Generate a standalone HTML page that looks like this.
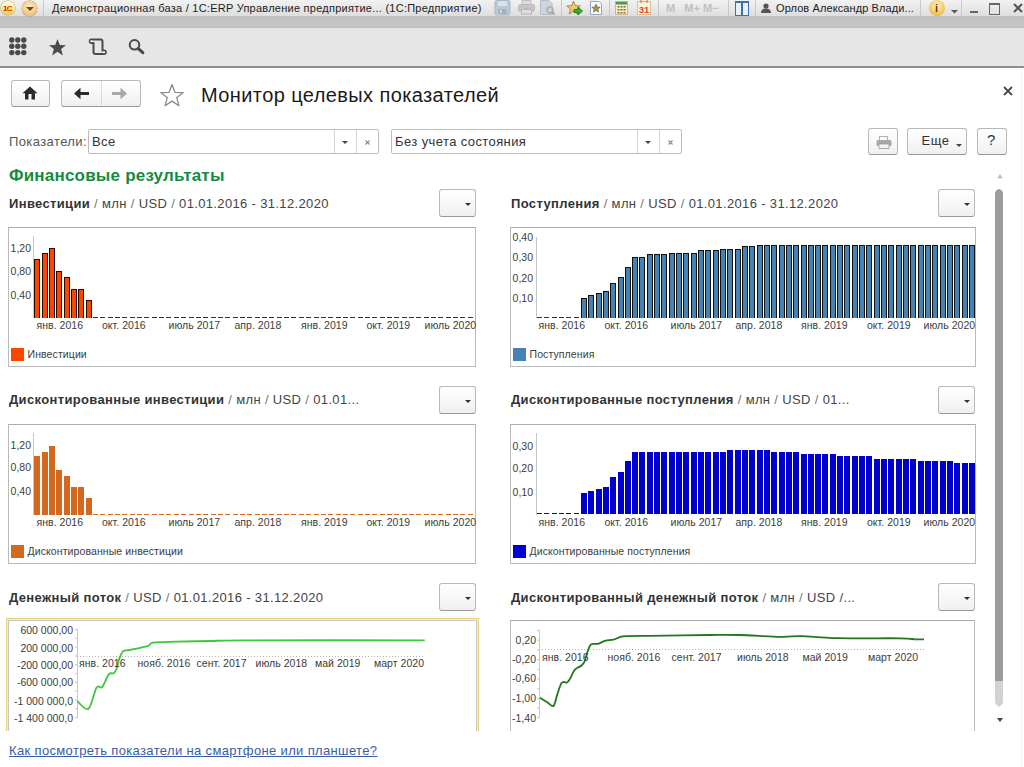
<!DOCTYPE html>
<html><head><meta charset="utf-8"><style>
*{margin:0;padding:0;box-sizing:content-box}
html,body{width:1024px;height:767px;overflow:hidden;background:#fff;font-family:"Liberation Sans",sans-serif;color:#333}
.abs{position:absolute}
div{position:absolute}
.btn{border:1px solid #b8b8b8;border-bottom-color:#989898;border-radius:3px;background:linear-gradient(#ffffff,#f0f0f0)}
.cbox{border:1px solid #bababa;border-top-color:#acacac;background:#fff}
.yl{font-size:10.5px;color:#3c3c3c;line-height:14px;white-space:nowrap;text-align:right}
.xl{font-size:10.5px;color:#3c3c3c;line-height:12px;white-space:nowrap;letter-spacing:0.03px}
.leg{width:13px;height:13px}
.legt{font-size:10.5px;color:#3c3c3c;line-height:16px;white-space:nowrap;letter-spacing:0.1px}
.ttl{font-size:13px;color:#444;white-space:nowrap;line-height:16px;letter-spacing:0.35px}
.ttl b{color:#333}
.ttl i{font-style:normal;color:#777}
.tb{font-size:11px;color:#222;white-space:nowrap;line-height:14px;letter-spacing:0.25px}
</style></head><body>

<div style="left:0;top:0;width:1024px;height:16px;background:linear-gradient(#f2f2f2,#dedede)"></div>
<div style="left:0;top:16px;width:1024px;height:12px;background:linear-gradient(#bfc0c2,#c4c5c7 80%,#bdbdbd)"></div>
<div style="left:1px;top:1px;width:14px;height:14px;border-radius:50%;background:linear-gradient(#fffde0,#fbf0a0 45%,#f3d648 85%,#e8c860);box-shadow:0 0 0 0.6px #b8a070"></div>
<div style="left:3px;top:4px;font-size:8px;font-weight:bold;color:#c03000;line-height:9px;letter-spacing:-0.6px">1<span style="font-size:8px;color:#e03a10">С</span></div>
<div style="left:22px;top:1px;width:15px;height:15px;border-radius:50%;background:radial-gradient(circle at 50% 40%,#fff0c8,#f3c27a 70%,#d89a50);box-shadow:0 0 0 0.5px #b89060"></div>
<svg class="abs" style="left:25px;top:6px" width="10" height="6"><path d="M1 1H9L5 5Z" fill="#5a4a30"/></svg>
<div style="left:43px;top:0;width:1px;height:16px;background:#c8c8c8"></div>
<div class="tb" style="left:52px;top:1px">Демонстрационная база / 1С:ERP Управление предприятие... (1С:Предприятие)</div>
<svg class="abs" style="left:494px;top:0" width="17" height="16"><rect x="1" y="0.5" width="15" height="14.5" rx="1.5" fill="#b9c9d6" stroke="#a8b8c6"/><rect x="4" y="1" width="9" height="5" fill="#d8e2ea"/><rect x="4.5" y="9" width="8" height="5" fill="#a0b2c0"/><rect x="6" y="10" width="2" height="3" fill="#d0dae2"/></svg>
<svg class="abs" style="left:518px;top:0" width="17" height="16"><rect x="4" y="0.5" width="9" height="5" fill="#d8dde2" stroke="#c0c4c8"/><rect x="0.5" y="4.5" width="16" height="7" rx="2" fill="#c8c6c2" stroke="#bcbab6"/><rect x="3.5" y="9.5" width="10" height="4.5" fill="#e0dedb" stroke="#b8b4b0"/><rect x="6" y="8" width="5" height="1" fill="#d8b0a8"/></svg>
<svg class="abs" style="left:539px;top:0" width="17" height="16"><path d="M1.5 0.5 H10 L13 3.5 V14.5 H1.5 Z" fill="#cdd6de" stroke="#b4bec8"/><circle cx="11" cy="10" r="3" fill="none" stroke="#b0aca4" stroke-width="1.5"/><path d="M13 12 L15.5 14.5" stroke="#a8a098" stroke-width="2"/></svg>
<div style="left:561px;top:0;width:1px;height:16px;background:#c8c8c8"></div>
<svg class="abs" style="left:566px;top:0" width="18" height="16"><path d="M7.5 1 L9.4 5.6 L14.3 6 L10.6 9.1 L11.7 14 L7.5 11.4 L3.3 14 L4.4 9.1 L0.7 6 L5.6 5.6 Z" fill="#f0c868" stroke="#9a7a40" stroke-width="0.8"/><path d="M8 9.5 H12 V7 L16.5 11 L12 15 V12.5 H8 Z" fill="#38b030" stroke="#1f6a1f" stroke-width="0.8"/></svg>
<svg class="abs" style="left:589px;top:0" width="14" height="16"><path d="M1.5 1.5 H10 L12.5 4 V14.5 H1.5 Z" fill="#f8f8ff" stroke="#9aa4c8"/><path d="M7 4 L8.2 7 L11.2 7.2 L8.9 9.1 L9.6 12 L7 10.4 L4.4 12 L5.1 9.1 L2.8 7.2 L5.8 7 Z" fill="#a89840" stroke="#6a5a30" stroke-width="0.6"/></svg>
<div style="left:609px;top:0;width:1px;height:16px;background:#c8c8c8"></div>
<svg class="abs" style="left:615px;top:0" width="14" height="16"><rect x="0.5" y="1.5" width="12" height="13" fill="#f6ecc8" stroke="#c8b890"/><rect x="1" y="2" width="11" height="2.5" fill="#4a9a4a"/><g fill="#8a6a40"><rect x="2.5" y="6" width="2" height="1.5"/><rect x="5.5" y="6" width="2" height="1.5"/><rect x="8.5" y="6" width="2" height="1.5"/><rect x="2.5" y="9" width="2" height="1.5"/><rect x="5.5" y="9" width="2" height="1.5"/><rect x="8.5" y="9" width="2" height="1.5"/><rect x="2.5" y="12" width="2" height="1.5"/><rect x="5.5" y="12" width="2" height="1.5"/><rect x="8.5" y="12" width="2" height="1.5"/></g></svg>
<svg class="abs" style="left:637px;top:0" width="15" height="16"><rect x="0.5" y="1.5" width="13" height="13" fill="#fdf3d8" stroke="#d8c098"/><g fill="#d89030"><circle cx="4" cy="1.5" r="1.2"/><circle cx="10" cy="1.5" r="1.2"/></g><text x="7" y="13" font-family="Liberation Sans" font-size="9.5" font-weight="bold" fill="#e04a2a" text-anchor="middle">31</text></svg>
<div style="left:658px;top:0;width:1px;height:16px;background:#c8c8c8"></div>
<div style="left:666px;top:2px;font-size:11px;font-weight:bold;color:#c0c0c0;line-height:12px;white-space:nowrap">M&nbsp;&nbsp; M+ M−</div>
<div style="left:728px;top:0;width:1px;height:16px;background:#c8c8c8"></div>
<div style="left:735px;top:1px;width:12px;height:12px;border:1px solid #4070a8;border-top-width:2px;background:linear-gradient(90deg,#e8f0f8 0 5px,#4070a8 5px 7px,#e8f0f8 7px)"></div>
<div style="left:755px;top:0;width:1px;height:16px;background:#c8c8c8"></div>
<svg class="abs" style="left:761px;top:3px" width="10" height="10"><circle cx="5" cy="3" r="2.6" fill="#555"/><path d="M0 10 Q0 5.5 5 5.5 Q10 5.5 10 10Z" fill="#555"/></svg>
<div class="tb" style="left:776px;top:1px;letter-spacing:0.1px">Орлов Александр Влади...</div>
<div style="left:920px;top:0;width:1px;height:16px;background:#c8c8c8"></div>
<div style="left:929px;top:0;width:16px;height:16px;border-radius:50%;background:radial-gradient(circle at 50% 35%,#fff4c0,#f0c050 70%,#c89030)"></div><div style="left:935px;top:2px;font-size:11px;font-weight:bold;line-height:12px;color:#604000">i</div>
<svg class="abs" style="left:951px;top:10px" width="7" height="4"><path d="M0 0H7L3.5 3.5Z" fill="#555"/></svg>
<div style="left:961px;top:0;width:1px;height:16px;background:#c8c8c8"></div>
<div style="left:970px;top:11px;width:8px;height:2px;background:#666"></div>
<div style="left:989px;top:3px;width:9px;height:9px;border:1px solid #666;border-top-width:2px"></div>
<svg class="abs" style="left:1013px;top:3px" width="10" height="10"><path d="M1 1L9 9M9 1L1 9" stroke="#555" stroke-width="2"/></svg>
<div style="left:0;top:28px;width:1024px;height:38px;background:#e6e6e6"></div>
<div style="left:0;top:66px;width:1024px;height:2px;background:#8e8e8e"></div>
<svg class="abs" style="left:9px;top:37px" width="18" height="19"><circle cx="2.8" cy="3.0" r="2.7" fill="#4a4a4a"/><circle cx="8.8" cy="3.0" r="2.7" fill="#4a4a4a"/><circle cx="14.8" cy="3.0" r="2.7" fill="#4a4a4a"/><circle cx="2.8" cy="9.3" r="2.7" fill="#4a4a4a"/><circle cx="8.8" cy="9.3" r="2.7" fill="#4a4a4a"/><circle cx="14.8" cy="9.3" r="2.7" fill="#4a4a4a"/><circle cx="2.8" cy="15.6" r="2.7" fill="#4a4a4a"/><circle cx="8.8" cy="15.6" r="2.7" fill="#4a4a4a"/><circle cx="14.8" cy="15.6" r="2.7" fill="#4a4a4a"/></svg>
<svg class="abs" style="left:48px;top:38px" width="19" height="19"><path d="M9.5 1 L11.8 7 L18 7.2 L13.1 11 L14.9 17.5 L9.5 13.8 L4.1 17.5 L5.9 11 L1 7.2 L7.2 7 Z" fill="#4a4a4a"/></svg>
<svg class="abs" style="left:88px;top:37px" width="20" height="20"><path d="M3.5 2.5 H12.5 Q14.5 2.5 14.5 4.5 V14.5 M3.5 2.5 Q1.8 2.5 1.8 4.2 Q1.8 6 3.5 6 H5.5 V15 Q5.5 17 7.5 17 H16 Q17.8 17 17.8 15.3 Q17.8 13.6 16 13.6 H14.5" fill="none" stroke="#4a4a4a" stroke-width="2" stroke-linejoin="round"/><circle cx="3.3" cy="4.2" r="1" fill="#fff"/><circle cx="16" cy="15.3" r="1" fill="#fff"/></svg>
<svg class="abs" style="left:128px;top:38px" width="18" height="18"><circle cx="6.5" cy="6.8" r="4.8" fill="none" stroke="#4a4a4a" stroke-width="2"/><path d="M10.3 10.6 L14.8 14.6" stroke="#4a4a4a" stroke-width="3.2" stroke-linecap="round"/></svg>
<div class="btn" style="left:11px;top:80px;width:37px;height:25px"></div>
<svg class="abs" style="left:22px;top:86px" width="16" height="14"><path d="M8 0.5 L15.5 7.2 H13 V13.5 H9.5 V8 H6.5 V13.5 H3 V7.2 H0.5 Z" fill="#2a2a2a"/></svg>
<div class="btn" style="left:61px;top:80px;width:78px;height:25px"></div>
<div style="left:101px;top:81px;width:1px;height:25px;background:#dadada"></div>
<svg class="abs" style="left:73px;top:87px" width="17" height="14"><path d="M1 6.5 L7.5 0.8 V4.9 H16 V8.1 H7.5 V12.2 Z" fill="#2a2a2a"/></svg>
<svg class="abs" style="left:111px;top:87px" width="17" height="14"><path d="M16 6.5 L9.5 0.8 V4.9 H1 V8.1 H9.5 V12.2 Z" fill="#a8a8a8"/></svg>
<svg class="abs" style="left:159px;top:83px" width="26" height="24"><path d="M13 1.5 L15.9 9.3 L24.2 9.6 L17.7 14.7 L19.9 22.7 L13 18.1 L6.1 22.7 L8.3 14.7 L1.8 9.6 L10.1 9.3 Z" fill="#fff" stroke="#8a8a8a" stroke-width="1.3" stroke-linejoin="round"/></svg>
<div style="left:201px;top:83px;letter-spacing:0.4px;font-size:20px;color:#1a1a1a;white-space:nowrap;line-height:24px">Монитор целевых показателей</div>
<svg class="abs" style="left:1003px;top:86px" width="10" height="10"><path d="M1 1L9 9M9 1L1 9" stroke="#4a4a4a" stroke-width="1.8"/></svg>
<div style="left:9px;top:133.5px;letter-spacing:0.4px;font-size:13px;color:#555;line-height:16px;white-space:nowrap">Показатели:</div>
<div style="left:88px;top:129px;width:289px;height:23px;border:1px solid #bcbcbc;border-radius:2px;background:#fff"></div><div style="left:334px;top:130px;width:1px;height:23px;background:#d4d4d4"></div><div style="left:356px;top:130px;width:1px;height:23px;background:#d4d4d4"></div><div style="left:92px;top:134px;font-size:13px;letter-spacing:0.4px;color:#333;line-height:16px;white-space:nowrap">Все</div><svg class="abs" style="left:342px;top:141px" width="6" height="4"><path d="M0 0H6L3 3Z" fill="#444"/></svg><svg class="abs" style="left:364px;top:139px" width="7" height="7"><path d="M1.5 1.5L5.5 5.5M5.5 1.5L1.5 5.5" stroke="#888" stroke-width="1.1"/></svg>
<div style="left:391px;top:129px;width:289px;height:23px;border:1px solid #bcbcbc;border-radius:2px;background:#fff"></div><div style="left:637px;top:130px;width:1px;height:23px;background:#d4d4d4"></div><div style="left:659px;top:130px;width:1px;height:23px;background:#d4d4d4"></div><div style="left:395px;top:134px;font-size:13px;letter-spacing:0.4px;color:#333;line-height:16px;white-space:nowrap">Без учета состояния</div><svg class="abs" style="left:645px;top:141px" width="6" height="4"><path d="M0 0H6L3 3Z" fill="#444"/></svg><svg class="abs" style="left:667px;top:139px" width="7" height="7"><path d="M1.5 1.5L5.5 5.5M5.5 1.5L1.5 5.5" stroke="#888" stroke-width="1.1"/></svg>
<div class="btn" style="left:868px;top:128px;width:28px;height:25px"></div>
<svg class="abs" style="left:876px;top:136px" width="16" height="14"><rect x="3.5" y="0.5" width="8" height="4" fill="#fafafa" stroke="#b0b0b0"/><rect x="0.5" y="4" width="15" height="6" rx="1.5" fill="#a8a8a8"/><rect x="3" y="8" width="10" height="4.5" fill="#f4f4f4" stroke="#999" stroke-width="0.8"/></svg>
<div class="btn" style="left:907px;top:128px;width:58px;height:25px"></div>
<div style="left:921.5px;top:133px;font-size:13px;letter-spacing:0.5px;color:#333;line-height:16px">Еще</div>
<svg class="abs" style="left:956px;top:144px" width="6" height="4"><path d="M0 0H6L3 3Z" fill="#444"/></svg>
<div class="btn" style="left:977px;top:128px;width:28px;height:25px"></div>
<div style="left:987px;top:132px;font-size:15px;color:#333;line-height:16px">?</div>
<div style="left:9px;top:167px;letter-spacing:0.2px;font-size:17px;font-weight:bold;color:#168a44;line-height:18px;white-space:nowrap">Финансовые результаты</div>
<svg class="abs" style="left:996.5px;top:174px" width="6" height="5"><path d="M0 4.5H6L3 0Z" fill="#c0c0c0"/></svg>
<svg class="abs" style="left:994px;top:186px" width="10" height="524"><path d="M1 8 Q1 4 5 3 Q9 4 9 8 V495 H1 Z" fill="#9c9c9c"/><path d="M1 495 H9 V516 Q9 518 5 521 Q1 518 1 516 Z" fill="#d2d2d2"/></svg>
<svg class="abs" style="left:996.5px;top:718px" width="6" height="5"><path d="M0 0H6L3 4Z" fill="#444"/></svg>
<div style="left:1021px;top:68px;width:1px;height:699px;background:#f3f3f3"></div>
<div class="ttl" style="left:9px;top:196px"><b>Инвестиции</b> <i>/</i> млн <i>/</i> USD <i>/</i> 01.01.2016 - 31.12.2020</div>
<div class="ttl" style="left:511px;top:196px"><b>Поступления</b> <i>/</i> млн <i>/</i> USD <i>/</i> 01.01.2016 - 31.12.2020</div>
<div class="ttl" style="left:9px;top:392px"><b>Дисконтированные инвестиции</b> <i>/</i> млн <i>/</i> USD <i>/</i> 01.01...</div>
<div class="ttl" style="left:511px;top:392px"><b>Дисконтированные поступления</b> <i>/</i> млн <i>/</i> USD <i>/</i> 01...</div>
<div class="ttl" style="left:9px;top:590px"><b>Денежный поток</b> <i>/</i> USD <i>/</i> 01.01.2016 - 31.12.2020</div>
<div class="ttl" style="left:511px;top:590px"><b>Дисконтированный денежный поток</b> <i>/</i> млн <i>/</i> USD /...</div>
<div class="btn" style="left:439px;top:189px;width:35px;height:26px"><svg width="6" height="4" style="position:absolute;left:25px;top:13px"><path d="M0 0H6L3 3Z" fill="#333"/></svg></div>
<div class="btn" style="left:938px;top:189px;width:35px;height:26px"><svg width="6" height="4" style="position:absolute;left:25px;top:13px"><path d="M0 0H6L3 3Z" fill="#333"/></svg></div>
<div class="btn" style="left:439px;top:386px;width:35px;height:26px"><svg width="6" height="4" style="position:absolute;left:25px;top:13px"><path d="M0 0H6L3 3Z" fill="#333"/></svg></div>
<div class="btn" style="left:938px;top:386px;width:35px;height:26px"><svg width="6" height="4" style="position:absolute;left:25px;top:13px"><path d="M0 0H6L3 3Z" fill="#333"/></svg></div>
<div class="btn" style="left:439px;top:583px;width:35px;height:26px"><svg width="6" height="4" style="position:absolute;left:25px;top:13px"><path d="M0 0H6L3 3Z" fill="#333"/></svg></div>
<div class="btn" style="left:938px;top:583px;width:35px;height:26px"><svg width="6" height="4" style="position:absolute;left:25px;top:13px"><path d="M0 0H6L3 3Z" fill="#333"/></svg></div>
<div class="cbox" style="left:8px;top:227px;width:466px;height:138px"></div>
<svg class="abs" style="left:0;top:0" width="1024" height="767" shape-rendering="crispEdges">
<line x1="33.7" y1="236" x2="33.7" y2="318.2" stroke="#c8c8c8" stroke-width="1"/>
<rect x="34" y="259" width="6" height="59" fill="#2a0a00"/>
<rect x="35" y="260" width="4" height="58" fill="#ff4500"/>
<rect x="42" y="253" width="6" height="65" fill="#2a0a00"/>
<rect x="43" y="254" width="4" height="64" fill="#ff4500"/>
<rect x="49" y="248" width="6" height="70" fill="#2a0a00"/>
<rect x="50" y="249" width="4" height="69" fill="#ff4500"/>
<rect x="56" y="271" width="6" height="47" fill="#2a0a00"/>
<rect x="57" y="272" width="4" height="46" fill="#ff4500"/>
<rect x="64" y="277" width="6" height="41" fill="#2a0a00"/>
<rect x="65" y="278" width="4" height="40" fill="#ff4500"/>
<rect x="71" y="289" width="6" height="29" fill="#2a0a00"/>
<rect x="72" y="290" width="4" height="28" fill="#ff4500"/>
<rect x="78" y="289" width="6" height="29" fill="#2a0a00"/>
<rect x="79" y="290" width="4" height="28" fill="#ff4500"/>
<rect x="86" y="300" width="6" height="18" fill="#2a0a00"/>
<rect x="87" y="301" width="4" height="17" fill="#ff4500"/>
<rect x="93" y="317" width="5" height="1" fill="#333"/>
<rect x="100" y="317" width="5" height="1" fill="#333"/>
<rect x="108" y="317" width="5" height="1" fill="#333"/>
<rect x="115" y="317" width="5" height="1" fill="#333"/>
<rect x="122" y="317" width="5" height="1" fill="#333"/>
<rect x="130" y="317" width="5" height="1" fill="#333"/>
<rect x="137" y="317" width="5" height="1" fill="#333"/>
<rect x="144" y="317" width="5" height="1" fill="#333"/>
<rect x="152" y="317" width="5" height="1" fill="#333"/>
<rect x="159" y="317" width="5" height="1" fill="#333"/>
<rect x="166" y="317" width="5" height="1" fill="#333"/>
<rect x="174" y="317" width="5" height="1" fill="#333"/>
<rect x="181" y="317" width="5" height="1" fill="#333"/>
<rect x="189" y="317" width="5" height="1" fill="#333"/>
<rect x="196" y="317" width="5" height="1" fill="#333"/>
<rect x="203" y="317" width="5" height="1" fill="#333"/>
<rect x="211" y="317" width="5" height="1" fill="#333"/>
<rect x="218" y="317" width="5" height="1" fill="#333"/>
<rect x="225" y="317" width="5" height="1" fill="#333"/>
<rect x="233" y="317" width="5" height="1" fill="#333"/>
<rect x="240" y="317" width="5" height="1" fill="#333"/>
<rect x="247" y="317" width="5" height="1" fill="#333"/>
<rect x="255" y="317" width="5" height="1" fill="#333"/>
<rect x="262" y="317" width="5" height="1" fill="#333"/>
<rect x="269" y="317" width="5" height="1" fill="#333"/>
<rect x="277" y="317" width="5" height="1" fill="#333"/>
<rect x="284" y="317" width="5" height="1" fill="#333"/>
<rect x="291" y="317" width="5" height="1" fill="#333"/>
<rect x="299" y="317" width="5" height="1" fill="#333"/>
<rect x="306" y="317" width="5" height="1" fill="#333"/>
<rect x="314" y="317" width="5" height="1" fill="#333"/>
<rect x="321" y="317" width="5" height="1" fill="#333"/>
<rect x="328" y="317" width="5" height="1" fill="#333"/>
<rect x="336" y="317" width="5" height="1" fill="#333"/>
<rect x="343" y="317" width="5" height="1" fill="#333"/>
<rect x="350" y="317" width="5" height="1" fill="#333"/>
<rect x="358" y="317" width="5" height="1" fill="#333"/>
<rect x="365" y="317" width="5" height="1" fill="#333"/>
<rect x="372" y="317" width="5" height="1" fill="#333"/>
<rect x="380" y="317" width="5" height="1" fill="#333"/>
<rect x="387" y="317" width="5" height="1" fill="#333"/>
<rect x="394" y="317" width="5" height="1" fill="#333"/>
<rect x="402" y="317" width="5" height="1" fill="#333"/>
<rect x="409" y="317" width="5" height="1" fill="#333"/>
<rect x="416" y="317" width="5" height="1" fill="#333"/>
<rect x="424" y="317" width="5" height="1" fill="#333"/>
<rect x="431" y="317" width="5" height="1" fill="#333"/>
<rect x="438" y="317" width="5" height="1" fill="#333"/>
<rect x="446" y="317" width="5" height="1" fill="#333"/>
<rect x="453" y="317" width="5" height="1" fill="#333"/>
<rect x="460" y="317" width="5" height="1" fill="#333"/>
<rect x="468" y="317" width="5" height="1" fill="#333"/>
</svg>
<div class="yl" style="right:993px;top:241px">1,20</div>
<div class="yl" style="right:993px;top:264.3px">0,80</div>
<div class="yl" style="right:993px;top:287.6px">0,40</div>
<div class="xl" style="left:36.5px;top:319px">янв. 2016</div>
<div class="xl" style="left:102px;top:319px">окт. 2016</div>
<div class="xl" style="left:168.5px;top:319px">июль 2017</div>
<div class="xl" style="left:234.5px;top:319px">апр. 2018</div>
<div class="xl" style="left:301px;top:319px">янв. 2019</div>
<div class="xl" style="left:366.5px;top:319px">окт. 2019</div>
<div class="xl" style="left:424.5px;top:319px">июль 2020</div>
<div class="leg" style="left:11px;top:348px;background:#ff4500"></div>
<div class="legt" style="left:27.5px;top:346px">Инвестиции</div>
<div class="cbox" style="left:510px;top:227px;width:464px;height:138px"></div>
<svg class="abs" style="left:0;top:0" width="1024" height="767" shape-rendering="crispEdges">
<line x1="536.5" y1="236.5" x2="536.5" y2="318.2" stroke="#c8c8c8" stroke-width="1"/>
<rect x="537" y="317" width="5" height="1" fill="#333"/>
<rect x="544" y="317" width="5" height="1" fill="#333"/>
<rect x="552" y="317" width="5" height="1" fill="#333"/>
<rect x="559" y="317" width="5" height="1" fill="#333"/>
<rect x="566" y="317" width="5" height="1" fill="#333"/>
<rect x="574" y="317" width="5" height="1" fill="#333"/>
<rect x="581" y="298" width="6" height="20" fill="#111"/>
<rect x="582" y="299" width="4" height="19" fill="#4682b4"/>
<rect x="588" y="295" width="6" height="23" fill="#111"/>
<rect x="589" y="296" width="4" height="22" fill="#4682b4"/>
<rect x="596" y="293" width="6" height="25" fill="#111"/>
<rect x="597" y="294" width="4" height="24" fill="#4682b4"/>
<rect x="603" y="291" width="6" height="27" fill="#111"/>
<rect x="604" y="292" width="4" height="26" fill="#4682b4"/>
<rect x="610" y="283" width="6" height="35" fill="#111"/>
<rect x="611" y="284" width="4" height="34" fill="#4682b4"/>
<rect x="618" y="277" width="6" height="41" fill="#111"/>
<rect x="619" y="278" width="4" height="40" fill="#4682b4"/>
<rect x="625" y="267" width="6" height="51" fill="#111"/>
<rect x="626" y="268" width="4" height="50" fill="#4682b4"/>
<rect x="632" y="257" width="6" height="61" fill="#111"/>
<rect x="633" y="258" width="4" height="60" fill="#4682b4"/>
<rect x="639" y="257" width="6" height="61" fill="#111"/>
<rect x="640" y="258" width="4" height="60" fill="#4682b4"/>
<rect x="647" y="254" width="6" height="64" fill="#111"/>
<rect x="648" y="255" width="4" height="63" fill="#4682b4"/>
<rect x="654" y="254" width="6" height="64" fill="#111"/>
<rect x="655" y="255" width="4" height="63" fill="#4682b4"/>
<rect x="661" y="254" width="6" height="64" fill="#111"/>
<rect x="662" y="255" width="4" height="63" fill="#4682b4"/>
<rect x="669" y="253" width="6" height="65" fill="#111"/>
<rect x="670" y="254" width="4" height="64" fill="#4682b4"/>
<rect x="676" y="253" width="6" height="65" fill="#111"/>
<rect x="677" y="254" width="4" height="64" fill="#4682b4"/>
<rect x="683" y="253" width="6" height="65" fill="#111"/>
<rect x="684" y="254" width="4" height="64" fill="#4682b4"/>
<rect x="691" y="253" width="6" height="65" fill="#111"/>
<rect x="692" y="254" width="4" height="64" fill="#4682b4"/>
<rect x="698" y="250" width="6" height="68" fill="#111"/>
<rect x="699" y="251" width="4" height="67" fill="#4682b4"/>
<rect x="705" y="250" width="6" height="68" fill="#111"/>
<rect x="706" y="251" width="4" height="67" fill="#4682b4"/>
<rect x="713" y="250" width="6" height="68" fill="#111"/>
<rect x="714" y="251" width="4" height="67" fill="#4682b4"/>
<rect x="720" y="249" width="6" height="69" fill="#111"/>
<rect x="721" y="250" width="4" height="68" fill="#4682b4"/>
<rect x="727" y="249" width="6" height="69" fill="#111"/>
<rect x="728" y="250" width="4" height="68" fill="#4682b4"/>
<rect x="735" y="249" width="6" height="69" fill="#111"/>
<rect x="736" y="250" width="4" height="68" fill="#4682b4"/>
<rect x="742" y="246" width="6" height="72" fill="#111"/>
<rect x="743" y="247" width="4" height="71" fill="#4682b4"/>
<rect x="749" y="246" width="6" height="72" fill="#111"/>
<rect x="750" y="247" width="4" height="71" fill="#4682b4"/>
<rect x="757" y="245" width="6" height="73" fill="#111"/>
<rect x="758" y="246" width="4" height="72" fill="#4682b4"/>
<rect x="764" y="245" width="6" height="73" fill="#111"/>
<rect x="765" y="246" width="4" height="72" fill="#4682b4"/>
<rect x="771" y="245" width="6" height="73" fill="#111"/>
<rect x="772" y="246" width="4" height="72" fill="#4682b4"/>
<rect x="779" y="245" width="6" height="73" fill="#111"/>
<rect x="780" y="246" width="4" height="72" fill="#4682b4"/>
<rect x="786" y="245" width="6" height="73" fill="#111"/>
<rect x="787" y="246" width="4" height="72" fill="#4682b4"/>
<rect x="793" y="245" width="6" height="73" fill="#111"/>
<rect x="794" y="246" width="4" height="72" fill="#4682b4"/>
<rect x="801" y="245" width="6" height="73" fill="#111"/>
<rect x="802" y="246" width="4" height="72" fill="#4682b4"/>
<rect x="808" y="245" width="6" height="73" fill="#111"/>
<rect x="809" y="246" width="4" height="72" fill="#4682b4"/>
<rect x="815" y="245" width="6" height="73" fill="#111"/>
<rect x="816" y="246" width="4" height="72" fill="#4682b4"/>
<rect x="822" y="245" width="6" height="73" fill="#111"/>
<rect x="823" y="246" width="4" height="72" fill="#4682b4"/>
<rect x="830" y="245" width="6" height="73" fill="#111"/>
<rect x="831" y="246" width="4" height="72" fill="#4682b4"/>
<rect x="837" y="245" width="6" height="73" fill="#111"/>
<rect x="838" y="246" width="4" height="72" fill="#4682b4"/>
<rect x="844" y="245" width="6" height="73" fill="#111"/>
<rect x="845" y="246" width="4" height="72" fill="#4682b4"/>
<rect x="852" y="245" width="6" height="73" fill="#111"/>
<rect x="853" y="246" width="4" height="72" fill="#4682b4"/>
<rect x="859" y="245" width="6" height="73" fill="#111"/>
<rect x="860" y="246" width="4" height="72" fill="#4682b4"/>
<rect x="866" y="245" width="6" height="73" fill="#111"/>
<rect x="867" y="246" width="4" height="72" fill="#4682b4"/>
<rect x="874" y="245" width="6" height="73" fill="#111"/>
<rect x="875" y="246" width="4" height="72" fill="#4682b4"/>
<rect x="881" y="245" width="6" height="73" fill="#111"/>
<rect x="882" y="246" width="4" height="72" fill="#4682b4"/>
<rect x="888" y="245" width="6" height="73" fill="#111"/>
<rect x="889" y="246" width="4" height="72" fill="#4682b4"/>
<rect x="896" y="245" width="6" height="73" fill="#111"/>
<rect x="897" y="246" width="4" height="72" fill="#4682b4"/>
<rect x="903" y="245" width="6" height="73" fill="#111"/>
<rect x="904" y="246" width="4" height="72" fill="#4682b4"/>
<rect x="910" y="245" width="6" height="73" fill="#111"/>
<rect x="911" y="246" width="4" height="72" fill="#4682b4"/>
<rect x="918" y="245" width="6" height="73" fill="#111"/>
<rect x="919" y="246" width="4" height="72" fill="#4682b4"/>
<rect x="925" y="245" width="6" height="73" fill="#111"/>
<rect x="926" y="246" width="4" height="72" fill="#4682b4"/>
<rect x="932" y="245" width="6" height="73" fill="#111"/>
<rect x="933" y="246" width="4" height="72" fill="#4682b4"/>
<rect x="940" y="245" width="6" height="73" fill="#111"/>
<rect x="941" y="246" width="4" height="72" fill="#4682b4"/>
<rect x="947" y="245" width="6" height="73" fill="#111"/>
<rect x="948" y="246" width="4" height="72" fill="#4682b4"/>
<rect x="954" y="245" width="6" height="73" fill="#111"/>
<rect x="955" y="246" width="4" height="72" fill="#4682b4"/>
<rect x="962" y="245" width="6" height="73" fill="#111"/>
<rect x="963" y="246" width="4" height="72" fill="#4682b4"/>
<rect x="969" y="245" width="6" height="73" fill="#111"/>
<rect x="970" y="246" width="4" height="72" fill="#4682b4"/>
</svg>
<div class="yl" style="right:491px;top:229.7px">0,40</div>
<div class="yl" style="right:491px;top:250.39999999999998px">0,30</div>
<div class="yl" style="right:491px;top:271px">0,20</div>
<div class="yl" style="right:491px;top:291.4px">0,10</div>
<div class="xl" style="left:538.5px;top:319px">янв. 2016</div>
<div class="xl" style="left:604.5px;top:319px">окт. 2016</div>
<div class="xl" style="left:670.5px;top:319px">июль 2017</div>
<div class="xl" style="left:735.5px;top:319px">апр. 2018</div>
<div class="xl" style="left:801px;top:319px">янв. 2019</div>
<div class="xl" style="left:867px;top:319px">окт. 2019</div>
<div class="xl" style="left:923.5px;top:319px">июль 2020</div>
<div class="leg" style="left:513px;top:348px;background:#4682b4"></div>
<div class="legt" style="left:529.5px;top:346px">Поступления</div>
<div class="cbox" style="left:8px;top:424px;width:466px;height:138px"></div>
<svg class="abs" style="left:0;top:0" width="1024" height="767" shape-rendering="crispEdges">
<line x1="33.7" y1="433" x2="33.7" y2="515" stroke="#c8c8c8" stroke-width="1"/>
<rect x="34" y="456" width="6" height="59" fill="#d2691e"/>
<rect x="42" y="452" width="6" height="63" fill="#d2691e"/>
<rect x="49" y="446" width="6" height="69" fill="#d2691e"/>
<rect x="56" y="470" width="6" height="45" fill="#d2691e"/>
<rect x="64" y="476" width="6" height="39" fill="#d2691e"/>
<rect x="71" y="487" width="6" height="28" fill="#d2691e"/>
<rect x="78" y="487" width="6" height="28" fill="#d2691e"/>
<rect x="86" y="498" width="6" height="17" fill="#d2691e"/>
<rect x="93" y="514" width="5" height="1" fill="#d2691e"/>
<rect x="100" y="514" width="5" height="1" fill="#d2691e"/>
<rect x="108" y="514" width="5" height="1" fill="#d2691e"/>
<rect x="115" y="514" width="5" height="1" fill="#d2691e"/>
<rect x="122" y="514" width="5" height="1" fill="#d2691e"/>
<rect x="130" y="514" width="5" height="1" fill="#d2691e"/>
<rect x="137" y="514" width="5" height="1" fill="#d2691e"/>
<rect x="144" y="514" width="5" height="1" fill="#d2691e"/>
<rect x="152" y="514" width="5" height="1" fill="#d2691e"/>
<rect x="159" y="514" width="5" height="1" fill="#d2691e"/>
<rect x="166" y="514" width="5" height="1" fill="#d2691e"/>
<rect x="174" y="514" width="5" height="1" fill="#d2691e"/>
<rect x="181" y="514" width="5" height="1" fill="#d2691e"/>
<rect x="189" y="514" width="5" height="1" fill="#d2691e"/>
<rect x="196" y="514" width="5" height="1" fill="#d2691e"/>
<rect x="203" y="514" width="5" height="1" fill="#d2691e"/>
<rect x="211" y="514" width="5" height="1" fill="#d2691e"/>
<rect x="218" y="514" width="5" height="1" fill="#d2691e"/>
<rect x="225" y="514" width="5" height="1" fill="#d2691e"/>
<rect x="233" y="514" width="5" height="1" fill="#d2691e"/>
<rect x="240" y="514" width="5" height="1" fill="#d2691e"/>
<rect x="247" y="514" width="5" height="1" fill="#d2691e"/>
<rect x="255" y="514" width="5" height="1" fill="#d2691e"/>
<rect x="262" y="514" width="5" height="1" fill="#d2691e"/>
<rect x="269" y="514" width="5" height="1" fill="#d2691e"/>
<rect x="277" y="514" width="5" height="1" fill="#d2691e"/>
<rect x="284" y="514" width="5" height="1" fill="#d2691e"/>
<rect x="291" y="514" width="5" height="1" fill="#d2691e"/>
<rect x="299" y="514" width="5" height="1" fill="#d2691e"/>
<rect x="306" y="514" width="5" height="1" fill="#d2691e"/>
<rect x="314" y="514" width="5" height="1" fill="#d2691e"/>
<rect x="321" y="514" width="5" height="1" fill="#d2691e"/>
<rect x="328" y="514" width="5" height="1" fill="#d2691e"/>
<rect x="336" y="514" width="5" height="1" fill="#d2691e"/>
<rect x="343" y="514" width="5" height="1" fill="#d2691e"/>
<rect x="350" y="514" width="5" height="1" fill="#d2691e"/>
<rect x="358" y="514" width="5" height="1" fill="#d2691e"/>
<rect x="365" y="514" width="5" height="1" fill="#d2691e"/>
<rect x="372" y="514" width="5" height="1" fill="#d2691e"/>
<rect x="380" y="514" width="5" height="1" fill="#d2691e"/>
<rect x="387" y="514" width="5" height="1" fill="#d2691e"/>
<rect x="394" y="514" width="5" height="1" fill="#d2691e"/>
<rect x="402" y="514" width="5" height="1" fill="#d2691e"/>
<rect x="409" y="514" width="5" height="1" fill="#d2691e"/>
<rect x="416" y="514" width="5" height="1" fill="#d2691e"/>
<rect x="424" y="514" width="5" height="1" fill="#d2691e"/>
<rect x="431" y="514" width="5" height="1" fill="#d2691e"/>
<rect x="438" y="514" width="5" height="1" fill="#d2691e"/>
<rect x="446" y="514" width="5" height="1" fill="#d2691e"/>
<rect x="453" y="514" width="5" height="1" fill="#d2691e"/>
<rect x="460" y="514" width="5" height="1" fill="#d2691e"/>
<rect x="468" y="514" width="5" height="1" fill="#d2691e"/>
</svg>
<div class="yl" style="right:993px;top:438px">1,20</div>
<div class="yl" style="right:993px;top:460.3px">0,80</div>
<div class="yl" style="right:993px;top:484px">0,40</div>
<div class="xl" style="left:36.5px;top:516px">янв. 2016</div>
<div class="xl" style="left:102px;top:516px">окт. 2016</div>
<div class="xl" style="left:168.5px;top:516px">июль 2017</div>
<div class="xl" style="left:234.5px;top:516px">апр. 2018</div>
<div class="xl" style="left:301px;top:516px">янв. 2019</div>
<div class="xl" style="left:366.5px;top:516px">окт. 2019</div>
<div class="xl" style="left:424.5px;top:516px">июль 2020</div>
<div class="leg" style="left:11px;top:545px;background:#d2691e"></div>
<div class="legt" style="left:27.5px;top:543px">Дисконтированные инвестиции</div>
<div class="cbox" style="left:510px;top:424px;width:464px;height:138px"></div>
<svg class="abs" style="left:0;top:0" width="1024" height="767" shape-rendering="crispEdges">
<line x1="536.5" y1="433" x2="536.5" y2="514.5" stroke="#c8c8c8" stroke-width="1"/>
<rect x="537" y="513" width="5" height="1" fill="#0000cd"/>
<rect x="544" y="513" width="5" height="1" fill="#0000cd"/>
<rect x="552" y="513" width="5" height="1" fill="#0000cd"/>
<rect x="559" y="513" width="5" height="1" fill="#0000cd"/>
<rect x="566" y="513" width="5" height="1" fill="#0000cd"/>
<rect x="574" y="513" width="5" height="1" fill="#0000cd"/>
<rect x="581" y="493" width="6" height="21" fill="#0000cd"/>
<rect x="588" y="491" width="6" height="23" fill="#0000cd"/>
<rect x="596" y="489" width="6" height="25" fill="#0000cd"/>
<rect x="603" y="487" width="6" height="27" fill="#0000cd"/>
<rect x="610" y="477" width="6" height="37" fill="#0000cd"/>
<rect x="618" y="472" width="6" height="42" fill="#0000cd"/>
<rect x="625" y="461" width="6" height="53" fill="#0000cd"/>
<rect x="632" y="452" width="6" height="62" fill="#0000cd"/>
<rect x="639" y="452" width="6" height="62" fill="#0000cd"/>
<rect x="647" y="452" width="6" height="62" fill="#0000cd"/>
<rect x="654" y="452" width="6" height="62" fill="#0000cd"/>
<rect x="661" y="452" width="6" height="62" fill="#0000cd"/>
<rect x="669" y="452" width="6" height="62" fill="#0000cd"/>
<rect x="676" y="452" width="6" height="62" fill="#0000cd"/>
<rect x="683" y="452" width="6" height="62" fill="#0000cd"/>
<rect x="691" y="452" width="6" height="62" fill="#0000cd"/>
<rect x="698" y="452" width="6" height="62" fill="#0000cd"/>
<rect x="705" y="452" width="6" height="62" fill="#0000cd"/>
<rect x="713" y="452" width="6" height="62" fill="#0000cd"/>
<rect x="720" y="452" width="6" height="62" fill="#0000cd"/>
<rect x="727" y="450" width="6" height="64" fill="#0000cd"/>
<rect x="735" y="450" width="6" height="64" fill="#0000cd"/>
<rect x="742" y="450" width="6" height="64" fill="#0000cd"/>
<rect x="749" y="450" width="6" height="64" fill="#0000cd"/>
<rect x="757" y="450" width="6" height="64" fill="#0000cd"/>
<rect x="764" y="450" width="6" height="64" fill="#0000cd"/>
<rect x="771" y="452" width="6" height="62" fill="#0000cd"/>
<rect x="779" y="452" width="6" height="62" fill="#0000cd"/>
<rect x="786" y="452" width="6" height="62" fill="#0000cd"/>
<rect x="793" y="452" width="6" height="62" fill="#0000cd"/>
<rect x="801" y="454" width="6" height="60" fill="#0000cd"/>
<rect x="808" y="454" width="6" height="60" fill="#0000cd"/>
<rect x="815" y="454" width="6" height="60" fill="#0000cd"/>
<rect x="822" y="454" width="6" height="60" fill="#0000cd"/>
<rect x="830" y="454" width="6" height="60" fill="#0000cd"/>
<rect x="837" y="456" width="6" height="58" fill="#0000cd"/>
<rect x="844" y="456" width="6" height="58" fill="#0000cd"/>
<rect x="852" y="456" width="6" height="58" fill="#0000cd"/>
<rect x="859" y="456" width="6" height="58" fill="#0000cd"/>
<rect x="866" y="456" width="6" height="58" fill="#0000cd"/>
<rect x="874" y="459" width="6" height="55" fill="#0000cd"/>
<rect x="881" y="459" width="6" height="55" fill="#0000cd"/>
<rect x="888" y="459" width="6" height="55" fill="#0000cd"/>
<rect x="896" y="459" width="6" height="55" fill="#0000cd"/>
<rect x="903" y="459" width="6" height="55" fill="#0000cd"/>
<rect x="910" y="459" width="6" height="55" fill="#0000cd"/>
<rect x="918" y="461" width="6" height="53" fill="#0000cd"/>
<rect x="925" y="461" width="6" height="53" fill="#0000cd"/>
<rect x="932" y="461" width="6" height="53" fill="#0000cd"/>
<rect x="940" y="461" width="6" height="53" fill="#0000cd"/>
<rect x="947" y="461" width="6" height="53" fill="#0000cd"/>
<rect x="954" y="463" width="6" height="51" fill="#0000cd"/>
<rect x="962" y="463" width="6" height="51" fill="#0000cd"/>
<rect x="969" y="463" width="6" height="51" fill="#0000cd"/>
</svg>
<div class="yl" style="right:491px;top:438.5px">0,30</div>
<div class="yl" style="right:491px;top:461px">0,20</div>
<div class="yl" style="right:491px;top:484.75px">0,10</div>
<div class="xl" style="left:538.5px;top:516px">янв. 2016</div>
<div class="xl" style="left:604.5px;top:516px">окт. 2016</div>
<div class="xl" style="left:670.5px;top:516px">июль 2017</div>
<div class="xl" style="left:735.5px;top:516px">апр. 2018</div>
<div class="xl" style="left:801px;top:516px">янв. 2019</div>
<div class="xl" style="left:867px;top:516px">окт. 2019</div>
<div class="xl" style="left:923.5px;top:516px">июль 2020</div>
<div class="leg" style="left:513px;top:545px;background:#0000cd"></div>
<div class="legt" style="left:529.5px;top:543px">Дисконтированные поступления</div>
<div style="left:6px;top:618px;width:471px;height:113px;border:1px solid #e9d27e;border-bottom:none"></div>
<div style="left:7px;top:619px;width:469px;height:112px;border:1px solid #f8f0b0;border-bottom:none"></div>
<div style="left:8px;top:620px;width:467px;height:111px;border:1px solid #c8c8c8;border-bottom:none;background:#fff"></div>
<div style="left:510px;top:620px;width:463px;height:111px;border:1px solid #bdbdbd;border-top-color:#a8a8a8;border-bottom:none;background:#fff"></div>
<svg class="abs" style="left:0;top:0" width="1024" height="767">
<line x1="77.5" y1="628.5" x2="77.5" y2="718" stroke="#c8c8c8"/>
<line x1="77" y1="656.5" x2="425" y2="656.5" stroke="#b4b4b4" stroke-dasharray="1 2"/>
<line x1="75" y1="629.6" x2="77" y2="629.6" stroke="#c8c8c8"/>
<line x1="75" y1="638.4" x2="77" y2="638.4" stroke="#c8c8c8"/>
<line x1="75" y1="647.2" x2="77" y2="647.2" stroke="#c8c8c8"/>
<line x1="75" y1="656" x2="77" y2="656" stroke="#c8c8c8"/>
<line x1="75" y1="664.8" x2="77" y2="664.8" stroke="#c8c8c8"/>
<line x1="75" y1="673.6" x2="77" y2="673.6" stroke="#c8c8c8"/>
<line x1="75" y1="682.4" x2="77" y2="682.4" stroke="#c8c8c8"/>
<line x1="75" y1="691.2" x2="77" y2="691.2" stroke="#c8c8c8"/>
<line x1="75" y1="700" x2="77" y2="700" stroke="#c8c8c8"/>
<line x1="75" y1="708.8" x2="77" y2="708.8" stroke="#c8c8c8"/>
<line x1="75" y1="717.6" x2="77" y2="717.6" stroke="#c8c8c8"/>
<path d="M77.2 701 C79.05 702.32 85.07 711.13 88.3 708.9 C91.53 706.67 94.28 691.23 96.6 687.6 C98.92 683.97 100.17 689.32 102.2 687.1 C104.23 684.88 106.87 676.62 108.8 674.3 C110.73 671.98 112.5 674.12 113.8 673.2 C115.1 672.28 115.68 671.2 116.6 668.8 C117.52 666.4 118.2 661.75 119.3 658.8 C120.4 655.85 121.43 652.57 123.2 651.1 C124.97 649.63 125.83 650.83 129.9 650 C133.97 649.17 143.73 647.32 147.6 646.1 C151.47 644.88 148.42 643.43 153.1 642.7 C157.78 641.97 166.07 641.98 175.7 641.7 C185.33 641.42 199.77 641.23 210.9 641 C222.03 640.77 206.87 640.42 242.5 640.3 C278.13 640.18 394.33 640.3 424.7 640.3" fill="none" stroke="#3cc83c" stroke-width="1.8" stroke-linejoin="round"/>
<line x1="539.5" y1="629.7" x2="539.5" y2="718" stroke="#c8c8c8"/>
<line x1="539" y1="649.5" x2="924" y2="649.5" stroke="#b4b4b4" stroke-dasharray="1 2"/>
<line x1="537" y1="630.5" x2="539" y2="630.5" stroke="#c8c8c8"/>
<line x1="537" y1="640.2" x2="539" y2="640.2" stroke="#c8c8c8"/>
<line x1="537" y1="649.9" x2="539" y2="649.9" stroke="#c8c8c8"/>
<line x1="537" y1="659.6" x2="539" y2="659.6" stroke="#c8c8c8"/>
<line x1="537" y1="669.3" x2="539" y2="669.3" stroke="#c8c8c8"/>
<line x1="537" y1="679" x2="539" y2="679" stroke="#c8c8c8"/>
<line x1="537" y1="688.7" x2="539" y2="688.7" stroke="#c8c8c8"/>
<line x1="537" y1="698.4" x2="539" y2="698.4" stroke="#c8c8c8"/>
<line x1="537" y1="708.1" x2="539" y2="708.1" stroke="#c8c8c8"/>
<line x1="537" y1="717.8" x2="539" y2="717.8" stroke="#c8c8c8"/>
<path d="M540 697.8 C541.27 698.58 545.35 701.13 547.6 702.5 C549.85 703.87 551.93 707.18 553.5 706 C555.07 704.82 555.73 699.12 557 695.4 C558.27 691.68 559.93 685.93 561.1 683.7 C562.27 681.47 563.02 682.2 564 682 C564.98 681.8 566.02 683 567 682.5 C567.98 682 568.73 680.95 569.9 679 C571.07 677.05 572.73 672.67 574 670.8 C575.27 668.93 576.23 668.68 577.5 667.8 C578.77 666.92 580.42 666.57 581.6 665.5 C582.78 664.43 583.62 663.65 584.6 661.4 C585.58 659.15 586.43 654.83 587.5 652 C588.57 649.17 589.25 645.77 591 644.4 C592.75 643.03 595.65 644.4 598 643.8 C600.35 643.2 602.55 641.48 605.1 640.8 C607.65 640.12 610.95 640.28 613.3 639.7 C615.65 639.12 617.05 637.88 619.2 637.3 C621.35 636.72 621.07 636.45 626.2 636.2 C631.33 635.95 636.03 636 650 635.8 C663.97 635.6 695.25 635.13 710 635 C724.75 634.87 726.73 634.7 738.5 635 C750.27 635.3 770.07 636.62 780.6 636.8 C791.13 636.98 792.3 635.87 801.7 636.1 C811.1 636.33 820.62 637.83 837 638.2 C853.38 638.57 887 638.12 900 638.3 C913 638.48 911 639.13 915 639.3 C919 639.47 922.5 639.3 924 639.3" fill="none" stroke="#1f781f" stroke-width="1.8" stroke-linejoin="round"/>
</svg>
<div class="yl" style="right:951px;top:623px">600 000,00</div>
<div class="yl" style="right:951px;top:640.6px">200 000,00</div>
<div class="yl" style="right:951px;top:658px">-200 000,00</div>
<div class="yl" style="right:951px;top:675.1px">-600 000,00</div>
<div class="yl" style="right:951px;top:693.5px">-1 000 000,0</div>
<div class="yl" style="right:951px;top:711px">-1 400 000,0</div>
<div class="xl" style="left:79px;top:657px">янв. 2016</div>
<div class="xl" style="left:137.5px;top:657px">нояб. 2016</div>
<div class="xl" style="left:196.5px;top:657px">сент. 2017</div>
<div class="xl" style="left:255.5px;top:657px">июль 2018</div>
<div class="xl" style="left:315px;top:657px">май 2019</div>
<div class="xl" style="left:374px;top:657px">март 2020</div>
<div class="yl" style="right:488px;top:633.2px">0,20</div>
<div class="yl" style="right:488px;top:651.6px">-0,20</div>
<div class="yl" style="right:488px;top:671.2px">-0,60</div>
<div class="yl" style="right:488px;top:691px">-1,00</div>
<div class="yl" style="right:488px;top:710.6px">-1,40</div>
<div class="xl" style="left:542px;top:650.5px">янв. 2016</div>
<div class="xl" style="left:607.5px;top:650.5px">нояб. 2016</div>
<div class="xl" style="left:671.5px;top:650.5px">сент. 2017</div>
<div class="xl" style="left:737px;top:650.5px">июль 2018</div>
<div class="xl" style="left:802.5px;top:650.5px">май 2019</div>
<div class="xl" style="left:868px;top:650.5px">март 2020</div>
<div style="left:0;top:731px;width:990px;height:36px;background:#fff"></div>
<div style="left:9px;top:743px;font-size:13px;letter-spacing:0.35px;color:#3a5ba8;line-height:16px;white-space:nowrap;text-decoration:underline">Как посмотреть показатели на смартфоне или планшете?</div>
</body></html>
